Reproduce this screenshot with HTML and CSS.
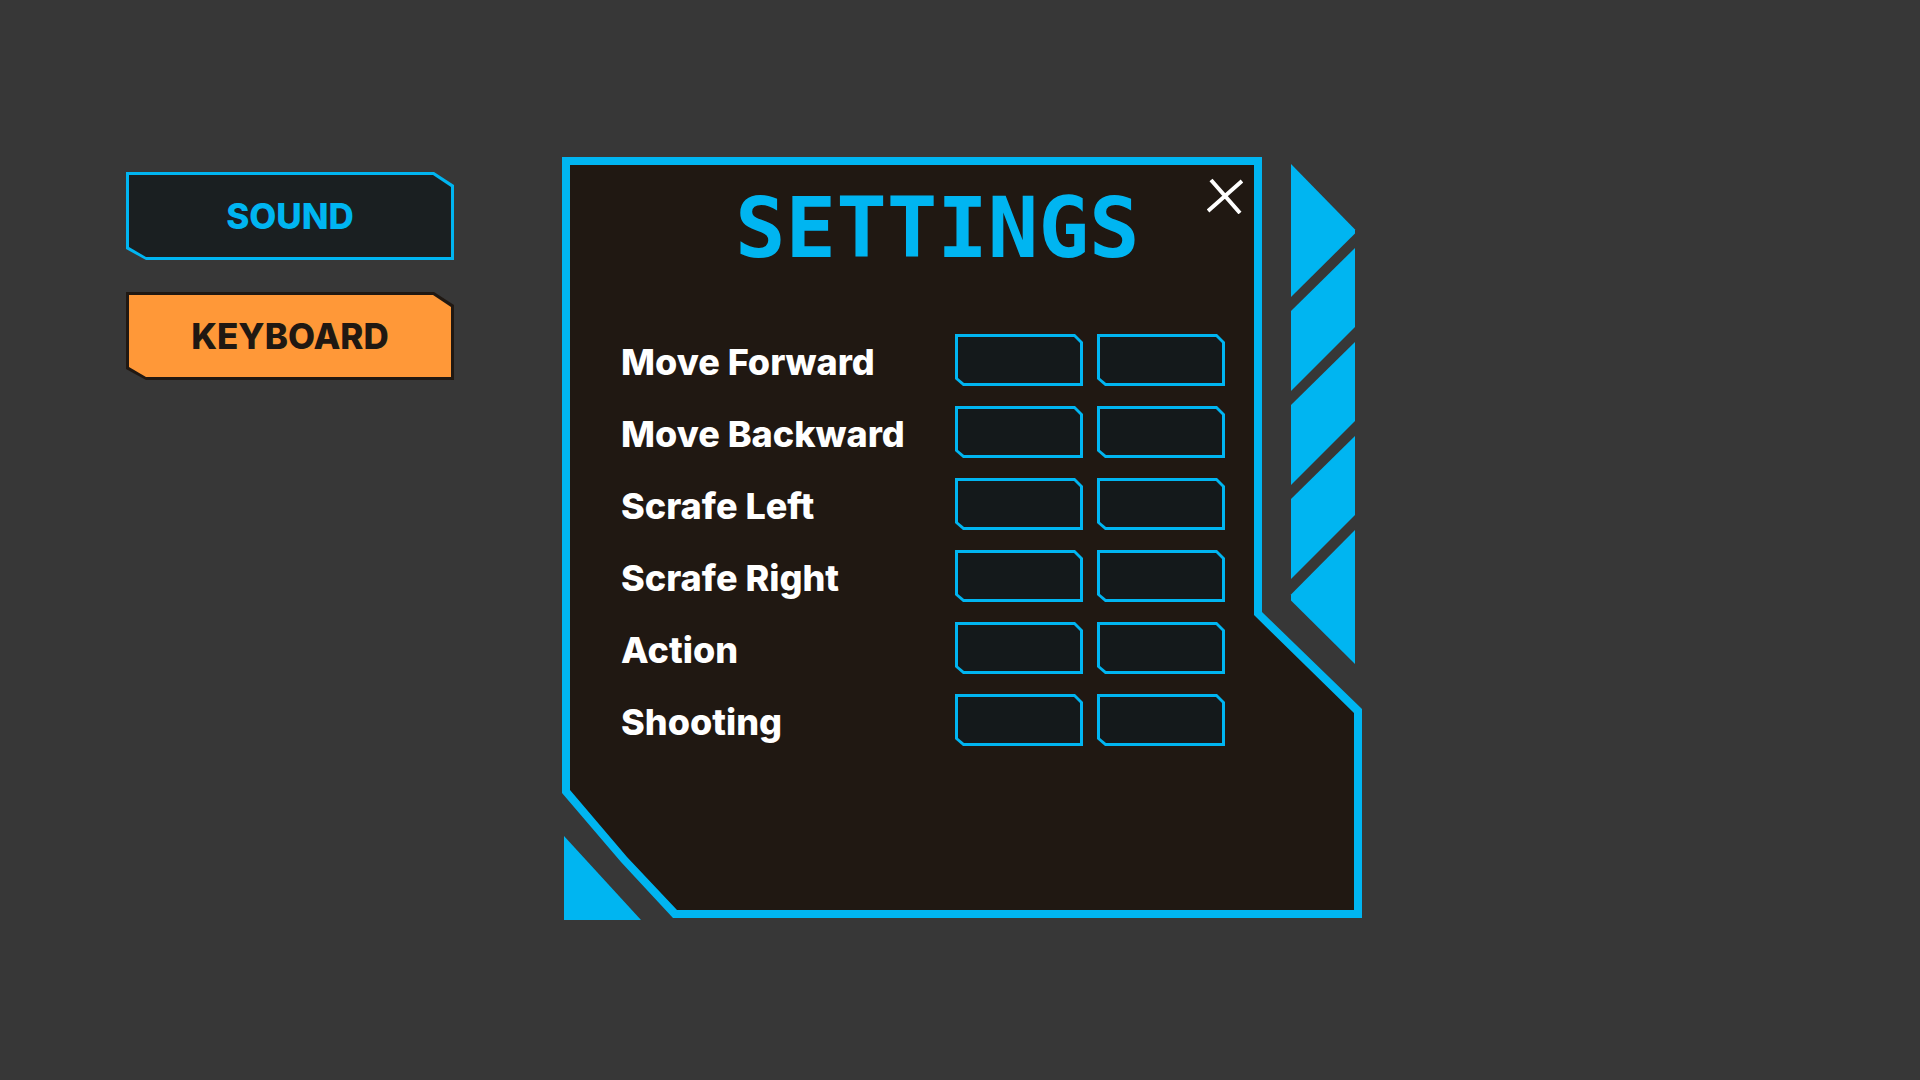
FILE: index.html
```html
<!DOCTYPE html>
<html lang="en">
<head>
<meta charset="utf-8">
<meta name="viewport" content="width=device-width, initial-scale=1">
<title>Settings</title>
<link rel="stylesheet" href="styles.css">
</head>
<body>
<div class="page">
  <nav class="tabs">
    <button type="button" class="tab"><span class="tab-face">SOUND</span></button>
    <button type="button" class="tab tab-active"><span class="tab-face">KEYBOARD</span></button>
  </nav>
  <main class="panel">
    <svg class="panel-frame" viewBox="0 0 800 763" aria-hidden="true">
      <path class="accent" d="M0 0H700V455L800 552V761H111L59 705L0 636Z"/>
      <path class="inner" d="M8 8H692V458L792 556V753H115L65 700L8 633Z"/>
      <path class="accent" d="M729 7L793 72.500V76.500L729 140Z"/>
      <path class="accent" d="M729 154L793 91V170L729 234Z"/>
      <path class="accent" d="M729 248L793 185V264L729 328Z"/>
      <path class="accent" d="M729 342L793 279V358L729 422Z"/>
      <path class="accent" d="M793 373L729 437.500V443.500L793 507Z"/>
      <path class="accent" d="M2 679L79 763H2Z"/>
    </svg>
    <div class="panel-content">
      <header class="panel-header">
        <h1 class="title">SETTINGS</h1>
        <button type="button" class="close" aria-label="Close">
          <svg viewBox="0 0 36 36" width="36" height="36" aria-hidden="true"><path d="M4 2L33 35M1 33L35 3"/></svg>
        </button>
      </header>
      <form class="bindings">
        <div class="row">
          <label class="label" for="forward">Move Forward</label>
          <span class="field"><input id="forward" type="text"></span>
          <span class="field"><input type="text" aria-label="Move Forward, second key"></span>
        </div>
        <div class="row">
          <label class="label" for="backward">Move Backward</label>
          <span class="field"><input id="backward" type="text"></span>
          <span class="field"><input type="text" aria-label="Move Backward, second key"></span>
        </div>
        <div class="row">
          <label class="label" for="left">Scrafe Left</label>
          <span class="field"><input id="left" type="text"></span>
          <span class="field"><input type="text" aria-label="Scrafe Left, second key"></span>
        </div>
        <div class="row">
          <label class="label" for="right">Scrafe Right</label>
          <span class="field"><input id="right" type="text"></span>
          <span class="field"><input type="text" aria-label="Scrafe Right, second key"></span>
        </div>
        <div class="row">
          <label class="label" for="action">Action</label>
          <span class="field"><input id="action" type="text"></span>
          <span class="field"><input type="text" aria-label="Action, second key"></span>
        </div>
        <div class="row">
          <label class="label" for="shooting">Shooting</label>
          <span class="field"><input id="shooting" type="text"></span>
          <span class="field"><input type="text" aria-label="Shooting, second key"></span>
        </div>
      </form>
    </div>
  </main>
</div>
</body>
</html>
```
FILE: styles.css
```css
:root {
  --blue: #00b5f1;
  --dark: #201812;
}

* {
  box-sizing: border-box;
}

body {
  margin: 0;
  background: #373737;
  color: #fff;
  font-family: Inter, "Open Sans", sans-serif;
}

.page {
  display: grid;
  grid-template-columns: 328px minmax(0, 800px);
  gap: 108px;
  padding: 157px 126px;
}

.tabs {
  display: flex;
  flex-direction: column;
  gap: 32px;
  padding-top: 15px;
}

.tab {
  display: flex;
  height: 88px;
  padding: 3px;
  border: 0;
  background: var(--blue);
  color: var(--blue);
  font: 800 35px/40px Inter, "Open Sans", sans-serif;
  clip-path: polygon(0 0, calc(100% - 20px) 0, 100% 13px, 100% 100%, 20px 100%, 0 calc(100% - 11px));
  cursor: pointer;
}

.tab-face {
  display: flex;
  flex: 1;
  align-self: stretch;
  align-items: center;
  justify-content: center;
  background: #1a1f21;
  clip-path: polygon(0 0, calc(100% - 18px) 0, 100% 12px, 100% 100%, 17px 100%, 0 calc(100% - 10px));
}

.tab-active {
  background: var(--dark);
  color: var(--dark);
}

.tab-active .tab-face {
  background: #ff9838;
}

.panel {
  display: grid;
  grid-template-columns: minmax(0, 1fr);
}

.panel-frame {
  grid-area: 1 / 1;
  width: 100%;
}

.accent {
  fill: var(--blue);
}

.inner {
  fill: var(--dark);
}

.panel-content {
  grid-area: 1 / 1;
}

.panel-header {
  display: flex;
  align-items: flex-start;
  justify-content: space-between;
  padding: 21px 119px 0 173px;
}

.title {
  margin: 0;
  color: var(--blue);
  font: bold 84px/100px "DejaVu Sans Mono", monospace;
}

.close {
  padding: 0;
  border: 0;
  background: none;
  cursor: pointer;
}

.close svg {
  display: block;
  fill: none;
  stroke: #fff;
  stroke-width: 4;
}

.bindings {
  display: grid;
  gap: 20px;
  padding: 56px 137px 0 59px;
}

.row {
  display: grid;
  grid-template-columns: minmax(0, 1fr) 128px 128px;
  column-gap: 14px;
  align-items: center;
}

.label {
  padding-top: 3px;
  font-size: 36px;
  font-weight: 800;
  line-height: 40px;
  white-space: nowrap;
}

.field {
  display: flex;
  height: 52px;
  padding: 3px;
  background: var(--blue);
  clip-path: polygon(0 0, calc(100% - 8px) 0, 100% 8px, 100% 100%, 8px 100%, 0 calc(100% - 7px));
}

.field input {
  width: 100%;
  padding: 0 10px;
  border: 0;
  outline: 0;
  background: #14191b;
  color: #fff;
  font: 800 24px/40px Inter, "Open Sans", sans-serif;
  clip-path: polygon(0 0, calc(100% - 6px) 0, 100% 6px, 100% 100%, 6px 100%, 0 calc(100% - 5px));
}
```
